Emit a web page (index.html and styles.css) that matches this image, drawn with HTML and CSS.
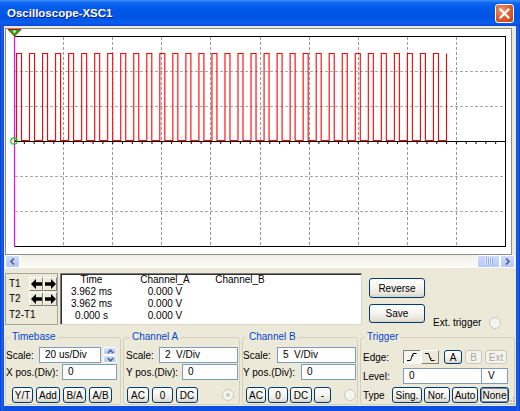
FILE: index.html
```html
<!DOCTYPE html>
<html lang="en">
<head>
<meta charset="utf-8">
<title>Oscilloscope-XSC1</title>
<link rel="stylesheet" href="styles.css">
</head>
<body>
<div class="window">
  <header class="titlebar">
    <span class="title">Oscilloscope-XSC1</span>
    <button class="close" aria-label="Close">
      <svg width="11" height="11" viewBox="0 0 11 11"><path d="M1.5 1.5L9.5 9.5M9.5 1.5L1.5 9.5" stroke="#fff" stroke-width="2.2" stroke-linecap="square"/></svg>
    </button>
  </header>
  <main class="client">
    <div class="screen">
      <svg class="plot" width="505" height="225" viewBox="6 29 505 225">
        <g stroke="#9a9a9a" stroke-dasharray="3 2">
          <line x1="63.5" y1="37" x2="63.5" y2="246"/>
          <line x1="112.5" y1="37" x2="112.5" y2="246"/>
          <line x1="161.5" y1="37" x2="161.5" y2="246"/>
          <line x1="210.5" y1="37" x2="210.5" y2="246"/>
          <line x1="260.5" y1="37" x2="260.5" y2="246"/>
          <line x1="309.5" y1="37" x2="309.5" y2="246"/>
          <line x1="358.5" y1="37" x2="358.5" y2="246"/>
          <line x1="407.5" y1="37" x2="407.5" y2="246"/>
          <line x1="456.5" y1="37" x2="456.5" y2="246"/>
        </g>
        <g stroke="#aaaaaa" stroke-dasharray="3 2">
          <line x1="15" y1="71.5" x2="505" y2="71.5"/>
          <line x1="15" y1="106.5" x2="505" y2="106.5"/>
          <line x1="15" y1="176.5" x2="505" y2="176.5"/>
          <line x1="15" y1="211.5" x2="505" y2="211.5"/>
        </g>
        <g stroke="#000">
          <line x1="14" y1="36.5" x2="506" y2="36.5"/>
          <line x1="14" y1="246.5" x2="506" y2="246.5"/>
          <line x1="505.5" y1="36" x2="505.5" y2="247"/>
          <line x1="14" y1="141.5" x2="506" y2="141.5"/>
          <line x1="14" y1="143" x2="506" y2="143" stroke-width="2" stroke-dasharray="1 8.82"/>
        </g>
        <path fill="none" stroke="#ff0000" stroke-width="1.1" d="M14 140.5H16.5V53.5h5V140.5h8.03V53.5h5V140.5h8.03V53.5h5V140.5h8.03V53.5h5V140.5h8.03V53.5h5V140.5h8.03V53.5h5V140.5h8.03V53.5h5V140.5h8.03V53.5h5V140.5h8.03V53.5h5V140.5h8.03V53.5h5V140.5h8.03V53.5h5V140.5h8.03V53.5h5V140.5h8.03V53.5h5V140.5h8.03V53.5h5V140.5h8.03V53.5h5V140.5h8.03V53.5h5V140.5h8.03V53.5h5V140.5h8.03V53.5h5V140.5h8.03V53.5h5V140.5h8.03V53.5h5V140.5h8.03V53.5h5V140.5h8.03V53.5h5V140.5h8.03V53.5h5V140.5h8.03V53.5h5V140.5h8.03V53.5h5V140.5h8.03V53.5h5V140.5h8.03V53.5h5V140.5h8.03V53.5h5V140.5h8.03V53.5h5V140.5h8.03V53.5h5V140.5h8.03V53.5h5V140.5h8.03V53.5h5V140.5h8.03V53.5h5V140.5h8.03V53.5"/>
        <line x1="14.5" y1="30" x2="14.5" y2="247" stroke="#ff00ff" stroke-width="1.2"/>
        <circle cx="14" cy="141" r="3.2" fill="none" stroke="#00d000" stroke-width="1.2"/>
        <path d="M8 29.5H21L14.5 36Z" fill="#00c000" stroke="#e00000" stroke-width="1"/>
        <circle cx="14.5" cy="31.5" r="1.2" fill="#fff"/>
      </svg>
    </div>
    <div class="hscroll">
      <span class="sb-btn"><svg width="7" height="7" viewBox="0 0 7 7"><path d="M5 0.5L2 3.5L5 6.5" fill="none" stroke="#4d6185" stroke-width="1.6"/></svg></span>
      <span class="sb-track"><span class="sb-thumb"><svg width="9" height="7" viewBox="0 0 9 7"><path d="M1.5 0V7M3.5 0V7M5.5 0V7M7.5 0V7" stroke="#eef3fe" stroke-width="1"/><path d="M2.5 0V7M4.5 0V7M6.5 0V7M8.5 0V7" stroke="#8faaec" stroke-width="1"/></svg></span></span>
      <span class="sb-btn"><svg width="7" height="7" viewBox="0 0 7 7"><path d="M2 0.5L5 3.5L2 6.5" fill="none" stroke="#4d6185" stroke-width="1.6"/></svg></span>
    </div>

    <section class="readout-row">
      <div class="cursors">
        <span class="clbl">T1</span>
        <span class="abtn"><svg width="11" height="10" viewBox="0 0 11 10"><path d="M0 5L5 0V3.3H11V6.7H5V10Z"/></svg></span>
        <span class="abtn"><svg width="11" height="10" viewBox="0 0 11 10"><path d="M11 5L6 0V3.3H0V6.7H6V10Z"/></svg></span>
        <span class="clbl">T2</span>
        <span class="abtn"><svg width="11" height="10" viewBox="0 0 11 10"><path d="M0 5L5 0V3.3H11V6.7H5V10Z"/></svg></span>
        <span class="abtn"><svg width="11" height="10" viewBox="0 0 11 10"><path d="M11 5L6 0V3.3H0V6.7H6V10Z"/></svg></span>
        <span class="clbl diff">T2-T1</span>
      </div>
      <div class="readings">
        <span>Time</span><span>Channel_A</span><span>Channel_B</span>
        <span>3.962 ms</span><span>0.000 V</span><span></span>
        <span>3.962 ms</span><span>0.000 V</span><span></span>
        <span>0.000 s</span><span>0.000 V</span><span></span>
      </div>
      <div class="actions">
        <button class="xbtn big">Reverse</button>
        <button class="xbtn big save">Save</button>
      </div>
      <div class="ext">
        <span>Ext. trigger</span>
        <span class="radio"></span>
      </div>
    </section>

    <section class="controls">
      <fieldset class="group timebase">
        <legend>Timebase</legend>
        <div class="row">
          <span class="lbl w33">Scale:</span>
          <span class="field w62">20 us/Div</span>
          <span class="spin">
            <span class="spin-half"><svg width="7" height="5" viewBox="0 0 7 5"><path d="M0.8 4L3.5 1.2L6.2 4" fill="none" stroke="#4d6185" stroke-width="1.5"/></svg></span>
            <span class="spin-half"><svg width="7" height="5" viewBox="0 0 7 5"><path d="M0.8 1L3.5 3.8L6.2 1" fill="none" stroke="#4d6185" stroke-width="1.5"/></svg></span>
          </span>
        </div>
        <div class="row">
          <span class="lbl w56">X pos.(Div):</span>
          <span class="field w55">0</span>
        </div>
        <div class="row btnrow center">
          <button class="xbtn" style="width:21px">Y/T</button>
          <button class="xbtn" style="width:24px">Add</button>
          <button class="xbtn" style="width:23px">B/A</button>
          <button class="xbtn" style="width:23px">A/B</button>
        </div>
      </fieldset>

      <fieldset class="group chA">
        <legend>Channel A</legend>
        <div class="row">
          <span class="lbl w33">Scale:</span>
          <span class="field w79">2&nbsp; V/Div</span>
        </div>
        <div class="row">
          <span class="lbl w56">Y pos.(Div):</span>
          <span class="field w56">0</span>
        </div>
        <div class="row btnrow">
          <button class="xbtn first" style="width:22px">AC</button>
          <button class="xbtn" style="width:21px">0</button>
          <button class="xbtn" style="width:22px">DC</button>
          <span class="radio checked ra"></span>
        </div>
      </fieldset>

      <fieldset class="group chB">
        <legend>Channel B</legend>
        <div class="row">
          <span class="lbl w34">Scale:</span>
          <span class="field w79">5&nbsp; V/Div</span>
        </div>
        <div class="row">
          <span class="lbl w58">Y pos.(Div):</span>
          <span class="field w55">0</span>
        </div>
        <div class="row btnrow tight">
          <button class="xbtn first" style="width:20px">AC</button>
          <button class="xbtn" style="width:20px">0</button>
          <button class="xbtn" style="width:22px">DC</button>
          <button class="xbtn" style="width:17px">-</button>
          <span class="radio rb"></span>
        </div>
      </fieldset>

      <fieldset class="group trigger">
        <legend>Trigger</legend>
        <div class="row r14">
          <span class="lbl w40">Edge:</span>
          <span class="tbtn pressed"><svg width="12" height="10" viewBox="0 0 12 10"><path d="M1 8.5H4.5L7 1.5H10.5M6 4.5L7.5 3" fill="none" stroke="#000" stroke-width="1"/></svg></span>
          <span class="tbtn"><svg width="12" height="10" viewBox="0 0 12 10"><path d="M1 1.5H4.5L7 8.5H10.5M6 5.5L7.5 7" fill="none" stroke="#000" stroke-width="1"/></svg></span>
          <button class="xbtn sm a-btn" style="width:18px">A</button>
          <button class="xbtn sm disabled" style="width:17px">B</button>
          <button class="xbtn sm disabled" style="width:22px">Ext</button>
        </div>
        <div class="row level">
          <span class="lbl w40">Level:</span>
          <span class="field w79">0</span>
          <span class="field unit">V</span>
        </div>
        <div class="row type">
          <span class="lbl w29">Type</span>
          <button class="xbtn" style="width:30px">Sing.</button>
          <button class="xbtn" style="width:26px">Nor.</button>
          <button class="xbtn" style="width:26px">Auto</button>
          <button class="xbtn active" style="width:29px">None</button>
        </div>
      </fieldset>
    </section>
    <span class="grip"><svg width="8" height="8" viewBox="0 0 8 8"><g fill="#c4c1b2"><rect x="6" y="0" width="2" height="2"/><rect x="3" y="3" width="2" height="2"/><rect x="6" y="3" width="2" height="2"/><rect x="0" y="6" width="2" height="2"/><rect x="3" y="6" width="2" height="2"/><rect x="6" y="6" width="2" height="2"/></g></svg></span>
  </main>
</div>
</body>
</html>
```

FILE: styles.css
```css
* { box-sizing: border-box; }
html, body { margin: 0; padding: 0; background: #fff; }
body {
  width: 520px; height: 411px; overflow: hidden;
  font-family: "Liberation Sans", Arial, sans-serif;
  font-size: 10px; color: #000;
}
.window {
  width: 520px; height: 411px;
  display: flex; flex-direction: column;
  background: linear-gradient(to right, #0a3fd0 0, #1a62ec 2px, #0b4ee2 4px, #0b4ee2 516px, #1a62ec 518px, #0a3fd0 520px);
}
.titlebar {
  height: 26px; flex: none;
  display: flex; align-items: center; justify-content: space-between;
  padding: 0 6px 0 7px;
  background: linear-gradient(to bottom, #3d8ff9 0, #0e66f2 3px, #0059ea 9px, #0054e3 17px, #0a5eee 23px, #0846d6 26px);
}
.title {
  color: #fff; font-weight: bold; font-size: 11.5px;
  text-shadow: 1px 1px 0 #0f2080;
}
.close {
  width: 19px; height: 19px; padding: 0; margin-top: 1px;
  border: 1px solid #fff; border-radius: 3px;
  background: radial-gradient(circle at 35% 30%, #f09a7c 0, #e0602f 45%, #c53f14 100%);
  display: flex; align-items: center; justify-content: center;
}
.client {
  flex: 1; margin: 0 4px 5px;
  background: #ece9d8;
  padding-top: 2px;
  position: relative;
  display: flex; flex-direction: column;
}
.screen {
  flex: none; margin-left: 1px;
  width: 507px; height: 227px;
  border: 1px solid #8e8e8e;
  background: #fff;
}
.plot { display: block; }

.hscroll {
  flex: none; margin-left: 1px;
  width: 510px; height: 13px;
  display: flex;
  background: linear-gradient(to bottom, #f1efe6, #fdfdfa);
}
.sb-btn {
  width: 15px; height: 13px;
  border: 1px solid #fff; border-radius: 2px;
  background: linear-gradient(to bottom, #d0dcfd, #b3c7f6);
  display: flex; align-items: center; justify-content: center;
}
.sb-track { flex: 1; display: flex; justify-content: flex-end; }
.sb-thumb {
  width: 23px; height: 13px;
  border: 1px solid #fff; border-radius: 2px;
  background: linear-gradient(to bottom, #cddafd, #b6c9f7);
  display: flex; align-items: center; justify-content: center;
}

.readout-row {
  flex: none; height: 63px;
  display: flex; align-items: flex-start;
  padding-left: 1px;
}
.cursors {
  margin-top: 5px;
  width: 53px; height: 52px;
  border: 1px solid #a6a497;
  display: grid;
  grid-template-columns: 21px 14px 14px;
  grid-template-rows: 14px 14px 12px;
  row-gap: 1px;
  padding: 3px 0 0 2px;
}
.clbl { line-height: 14px; padding-left: 1px; }
.clbl.diff { grid-column: 1 / 4; line-height: 12px; margin-top: 2px; }
.abtn {
  width: 14px; height: 14px;
  border: 1px solid; border-color: #fff #808080 #808080 #fff;
  background: #ece9d8;
  display: flex; align-items: center; justify-content: center;
}
.abtn svg { fill: #000; }

.readings {
  margin: 5px 0 0 2px;
  width: 302px; height: 52px;
  background: #fff;
  border: 1px solid; border-color: #7a7a7a #d8d6cc #d8d6cc #7a7a7a;
  box-shadow: inset 1px 1px 0 #303030;
  display: grid;
  grid-template-columns: 61px 86px 64px;
  grid-auto-rows: 12px;
  line-height: 12px;
  text-align: center;
}

.xbtn {
  font: inherit; color: #000;
  height: 16px; padding: 0;
  border: 1px solid #003c74; border-radius: 3px;
  background: linear-gradient(to bottom, #ffffff 0, #f4f3ee 50%, #e6e3d8 85%, #d6d0c5 100%);
  display: inline-flex; align-items: center; justify-content: center;
  flex: none;
}
.xbtn.big { width: 56px; height: 20px; }
.xbtn.big.save { height: 19px; }
.xbtn.sm { height: 14px; }
.xbtn.disabled { color: #aca899; border-color: #c9c7ba; background: #f4f3ee; }
.xbtn.active { background: linear-gradient(to bottom, #e8e6dc, #f2f1ea); box-shadow: inset 0 0 0 1px #7a8aa8; }
.actions {
  margin: 10px 0 0 7px;
  display: flex; flex-direction: column; gap: 6px;
}
.ext {
  margin: 49px 0 0 8px;
  display: flex; align-items: center; gap: 8px;
  line-height: 12px;
}
.radio {
  width: 12px; height: 12px; flex: none;
  border: 1px solid #cac8bb; border-radius: 50%;
  background: #f5f4ef;
  display: inline-flex; align-items: center; justify-content: center;
}
.radio.checked::after {
  content: ""; width: 4px; height: 4px; border-radius: 50%;
  background: #cac8bb;
}

.controls {
  flex: none;
  display: flex; gap: 2px;
  margin-left: 1px;
}
.group {
  margin: 0; min-width: 0;
  height: 74px;
  border: 1px solid #d0d0bf; border-radius: 3px;
  padding: 4px 0 0 0;
}
.group legend {
  color: #0046d5;
  line-height: 12px;
  padding: 0 2px;
  margin-left: 4px;
}
.timebase { width: 116px; }
.chA { width: 117px; padding-left: 2px; }
.chB { width: 116px; }
.trigger { width: 155px; padding: 7px 0 0 2px; }
.trigger legend { margin-left: 2px; }

.row { display: flex; align-items: center; height: 16px; }
.row + .row { margin-top: 1px; }
.row.btnrow { margin-top: 7px; gap: 3px; }
.row.btnrow.center { justify-content: center; gap: 3px; padding-right: 2px; }
.row.btnrow .first { margin-left: 1px; }
.row.btnrow.tight { gap: 2px; }
.row.btnrow.tight .first { margin-left: 3px; }
.lbl { flex: none; white-space: nowrap; }
.w29 { width: 29px; } .w33 { width: 33px; } .w34 { width: 34px; } .w40 { width: 40px; }
.w55 { width: 55px; } .w56 { width: 56px; } .w58 { width: 58px; } .w62 { width: 62px; } .w79 { width: 79px; }
.field {
  flex: none; height: 16px;
  border: 1px solid #7f9db9; background: #fff;
  padding-left: 5px; line-height: 14px;
  white-space: nowrap;
}
.spin {
  margin-left: 2px;
  width: 14px; height: 16px;
  display: flex; flex-direction: column;
}
.spin-half {
  flex: 1;
  border: 1px solid #fff; border-radius: 2px;
  background: linear-gradient(to bottom, #d2defd, #b6c9f7);
  display: flex; align-items: center; justify-content: center;
}
.ra { margin-left: 21px; }
.rb { margin-left: 11px; }

.row.r14 { height: 14px; }
.tbtn {
  width: 18px; height: 14px; flex: none;
  border: 1px solid; border-color: #fff #808080 #808080 #fff;
  background: #ece9d8;
  display: flex; align-items: center; justify-content: center;
}
.tbtn.pressed {
  border-color: #808080 #fff #fff #808080;
  background: #f7f6f1;
}
.a-btn { margin-left: 5px; }
.r14 .disabled { margin-left: 3px; }
.row.level { margin-top: 4px; }
.field.unit { width: 26px; border-left: none; padding-left: 6px; }
.row.type { margin-top: 3px; gap: 2px; }
.row.type .lbl { margin-right: -2px; }

.grip { position: absolute; right: 1px; bottom: 1px; display: block; line-height: 0; }
```
